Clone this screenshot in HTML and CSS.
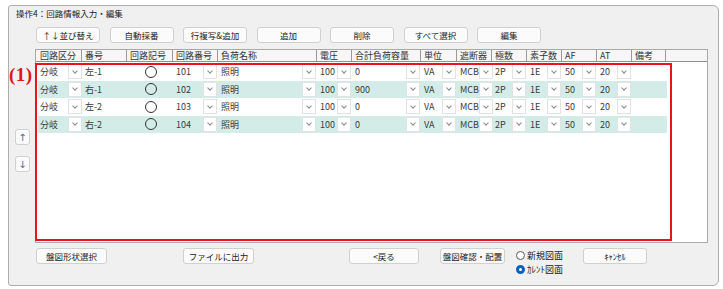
FILE: index.html
```html
<!DOCTYPE html>
<html lang="ja">
<head>
<meta charset="utf-8">
<link rel="stylesheet" href="styles.css">
</head>
<body>
<div class="frame">
  <div class="title">操作4：回路情報入力・編集</div>
  <div class="toolbar">
    <button class="btn tb">↑↓並び替え</button>
    <button class="btn tb">自動採番</button>
    <button class="btn tb">行複写&amp;追加</button>
    <button class="btn tb">追加</button>
    <button class="btn tb">削除</button>
    <button class="btn tb">すべて選択</button>
    <button class="btn tb">編集</button>
  </div>
  <div class="main">
    <div class="side">
      <button class="sbtn up">↑</button>
      <button class="sbtn down">↓</button>
    </div>
    <div class="grid">
      <div class="ghead">
        <div class="hc">回路区分</div>
        <div class="hc">番号</div>
        <div class="hc">回路記号</div>
        <div class="hc">回路番号</div>
        <div class="hc">負荷名称</div>
        <div class="hc">電圧</div>
        <div class="hc">合計負荷容量</div>
        <div class="hc">単位</div>
        <div class="hc">遮断器</div>
        <div class="hc">極数</div>
        <div class="hc">素子数</div>
        <div class="hc">AF</div>
        <div class="hc">AT</div>
        <div class="hc">備考</div>
      </div>
      <div class="gbody">
        <div class="row">
          <div class="c first"><span class="t">分岐</span><span class="dd"></span></div>
          <div class="c"><span class="t">左-1</span></div>
          <div class="c sym"><span class="circle"></span></div>
          <div class="c"><span class="t">101</span><span class="dd"></span></div>
          <div class="c"><span class="t">照明</span><span class="dd"></span></div>
          <div class="c"><span class="t">100</span><span class="dd"></span></div>
          <div class="c"><span class="t">0</span><span class="dd"></span></div>
          <div class="c"><span class="t">VA</span><span class="dd"></span></div>
          <div class="c"><span class="t">MCB</span><span class="dd"></span></div>
          <div class="c"><span class="t">2P</span><span class="dd"></span></div>
          <div class="c"><span class="t">1E</span><span class="dd"></span></div>
          <div class="c"><span class="t">50</span><span class="dd"></span></div>
          <div class="c"><span class="t">20</span><span class="dd"></span></div>
          <div class="c"></div>
        </div>
        <div class="row alt">
          <div class="c first"><span class="t">分岐</span><span class="dd"></span></div>
          <div class="c"><span class="t">右-1</span></div>
          <div class="c sym"><span class="circle"></span></div>
          <div class="c"><span class="t">102</span><span class="dd"></span></div>
          <div class="c"><span class="t">照明</span><span class="dd"></span></div>
          <div class="c"><span class="t">100</span><span class="dd"></span></div>
          <div class="c"><span class="t">900</span><span class="dd"></span></div>
          <div class="c"><span class="t">VA</span><span class="dd"></span></div>
          <div class="c"><span class="t">MCB</span><span class="dd"></span></div>
          <div class="c"><span class="t">2P</span><span class="dd"></span></div>
          <div class="c"><span class="t">1E</span><span class="dd"></span></div>
          <div class="c"><span class="t">50</span><span class="dd"></span></div>
          <div class="c"><span class="t">20</span><span class="dd"></span></div>
          <div class="c"></div>
        </div>
        <div class="row">
          <div class="c first"><span class="t">分岐</span><span class="dd"></span></div>
          <div class="c"><span class="t">左-2</span></div>
          <div class="c sym"><span class="circle"></span></div>
          <div class="c"><span class="t">103</span><span class="dd"></span></div>
          <div class="c"><span class="t">照明</span><span class="dd"></span></div>
          <div class="c"><span class="t">100</span><span class="dd"></span></div>
          <div class="c"><span class="t">0</span><span class="dd"></span></div>
          <div class="c"><span class="t">VA</span><span class="dd"></span></div>
          <div class="c"><span class="t">MCB</span><span class="dd"></span></div>
          <div class="c"><span class="t">2P</span><span class="dd"></span></div>
          <div class="c"><span class="t">1E</span><span class="dd"></span></div>
          <div class="c"><span class="t">50</span><span class="dd"></span></div>
          <div class="c"><span class="t">20</span><span class="dd"></span></div>
          <div class="c"></div>
        </div>
        <div class="row alt">
          <div class="c first"><span class="t">分岐</span><span class="dd"></span></div>
          <div class="c"><span class="t">右-2</span></div>
          <div class="c sym"><span class="circle"></span></div>
          <div class="c"><span class="t">104</span><span class="dd"></span></div>
          <div class="c"><span class="t">照明</span><span class="dd"></span></div>
          <div class="c"><span class="t">100</span><span class="dd"></span></div>
          <div class="c"><span class="t">0</span><span class="dd"></span></div>
          <div class="c"><span class="t">VA</span><span class="dd"></span></div>
          <div class="c"><span class="t">MCB</span><span class="dd"></span></div>
          <div class="c"><span class="t">2P</span><span class="dd"></span></div>
          <div class="c"><span class="t">1E</span><span class="dd"></span></div>
          <div class="c"><span class="t">50</span><span class="dd"></span></div>
          <div class="c"><span class="t">20</span><span class="dd"></span></div>
          <div class="c"></div>
        </div>
      </div>
    </div>
  </div>
  <div class="bottom">
    <button class="btn b1">盤図形状選択</button>
    <button class="btn b2">ファイルに出力</button>
    <button class="btn b3">&lt;戻る</button>
    <button class="btn b4">盤図確認・配置</button>
    <div class="radios">
      <label class="radio"><span class="rdot"></span>新規図面</label>
      <label class="radio"><span class="rdot on"></span>ｶﾚﾝﾄ図面</label>
    </div>
    <button class="btn b5">ｷｬﾝｾﾙ</button>
  </div>
</div>
<div class="mark">(1)</div>
<div class="redbox"></div>
</body>
</html>
```
FILE: styles.css
```css
html, body {
  margin: 0;
  padding: 0;
  background: #ffffff;
  overflow: hidden;
}
body {
  width: 723px;
  height: 289px;
  font-family: "Noto Sans CJK JP", "Noto Sans", sans-serif;
  color: #222;
}
.frame {
  margin: 5px 0 0 8px;
  width: 711px;
  height: 281px;
  box-sizing: border-box;
  border: 1px solid #adadad;
  border-radius: 3px 6px 6px 3px;
  background: #f0f0f0;
}
.title {
  height: 15px;
  line-height: 15px;
  padding-left: 7px;
  font-size: 8.5px;
  color: #222;
}
.toolbar {
  margin-top: 6px;
  height: 16px;
  padding-left: 27px;
  display: flex;
  gap: 9.5px;
}
.btn {
  box-sizing: border-box;
  height: 16px;
  padding: 0;
  margin: 0;
  border: 1px solid #d0d0d0;
  border-radius: 3px;
  background: #fbfbfb;
  font-family: "Noto Sans CJK JP", sans-serif;
  font-size: 8.5px;
  line-height: 14px;
  color: #222;
  text-align: center;
}
.tb { width: 64px; }
.main {
  margin-top: 6px;
  height: 194px;
  display: flex;
}
.side {
  width: 26px;
  display: flex;
  flex-direction: column;
}
.sbtn {
  box-sizing: border-box;
  width: 15px;
  height: 16px;
  margin-left: 6px;
  padding: 0;
  border: 1px solid #d0d0d0;
  border-radius: 3px;
  background: #fbfbfb;
  color: #4d6f99;
  font-size: 10px;
  line-height: 13px;
  font-family: "DejaVu Sans", sans-serif;
}
.up { margin-top: 80px; }
.down { margin-top: 11px; }
.grid {
  width: 673px;
  height: 194px;
  box-sizing: border-box;
  border: 1px solid #a9a9a9;
  background: #fff;
}
.ghead, .row {
  display: grid;
  grid-template-columns: 44px 45px 46px 45px 99px 35px 69px 36px 35px 35px 35px 35px 35px 34px;
}
.ghead {
  height: 11px;
  padding-left: 2px;
  background: #f6f6f6;
  border-bottom: 1px solid #8f8f8f;
}
.hc {
  box-sizing: border-box;
  border-right: 1px solid #9a9a9a;
  padding-left: 3px;
  font-size: 9px;
  line-height: 11px;
  height: 11px;
  color: #333;
  white-space: nowrap;
}
.ghead .hc:first-child { padding-left: 2px; }
.gbody {
  padding-top: 1px;
}
.row {
  margin-left: 2px;
  width: 629px;
  height: 17.5px;
}
.row.alt { background: #d4ece8; }
.c {
  display: flex;
  align-items: center;
  min-width: 0;
}
.t {
  padding-left: 3px;
  font-size: 9px;
  color: #3a3a3a;
  white-space: nowrap;
}
.c.first .t { padding-left: 2px; }
.dd {
  margin-left: auto;
  margin-right: 1px;
  width: 14px;
  height: 15px;
  box-sizing: border-box;
  border: 1px solid #e2e2e2;
  background: #fff;
  display: flex;
  align-items: center;
  justify-content: center;
  flex-shrink: 0;
}
.c.first .dd { margin-right: 0; }
.dd::after {
  content: "";
  width: 3px;
  height: 3px;
  border-right: 1px solid #8a8a8a;
  border-bottom: 1px solid #8a8a8a;
  transform: translateY(-1px) rotate(45deg);
}
.sym {
  justify-content: center;
}
.circle {
  width: 12px;
  height: 12px;
  box-sizing: border-box;
  border: 1px solid #333;
  border-radius: 50%;
  margin-left: 2px;
}
.bottom {
  margin-top: 5px;
  padding-left: 27px;
  display: flex;
  align-items: flex-start;
}
.b1 { width: 71px; }
.b2 { width: 71px; margin-left: 76px; }
.b3 { width: 70px; margin-left: 95px; }
.b4 { width: 65px; margin-left: 21px; }
.b5 { width: 64px; }
.radios {
  width: 67px;
  margin-left: 11px;
  display: flex;
  flex-direction: column;
}
.radio {
  height: 14px;
  display: flex;
  align-items: center;
  gap: 2px;
  font-size: 9px;
  color: #222;
}
.rdot {
  width: 9px;
  height: 9px;
  box-sizing: border-box;
  border: 1px solid #5a5a5a;
  border-radius: 50%;
  background: #fff;
}
.rdot.on {
  border: 3px solid #0a5fc0;
}
.mark {
  position: absolute;
  left: 9px;
  top: 64px;
  font-family: "Liberation Serif", serif;
  font-weight: bold;
  font-size: 19px;
  line-height: 22px;
  color: #e0141b;
  letter-spacing: 0.5px;
}
.redbox {
  position: absolute;
  left: 35px;
  top: 63px;
  width: 637px;
  height: 178px;
  box-sizing: border-box;
  border: 2px solid #e8141b;
}
```
